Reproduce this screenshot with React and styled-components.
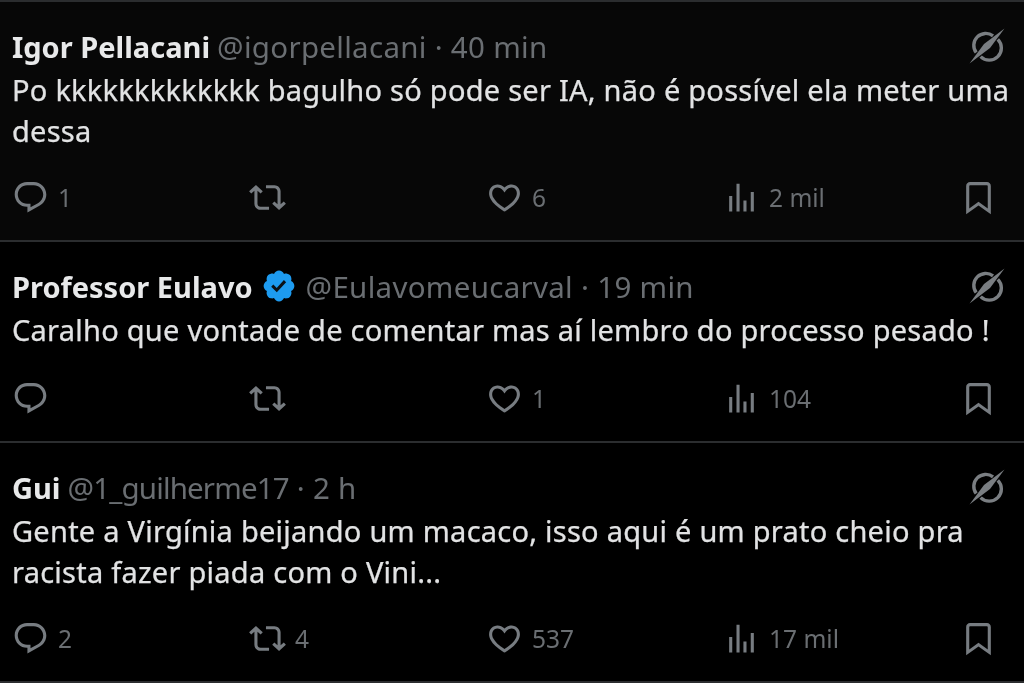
import React from 'react';
import styled, { createGlobalStyle } from 'styled-components';

const GlobalStyle = createGlobalStyle`
  html, body {
    margin: 0;
    padding: 0;
    background: #000;
  }
  body {
    font-family: "Noto Sans", "Open Sans", sans-serif;
  }
`;

const posts = [
  {
    name: 'Igor Pellacani',
    handle: '@igorpellacani',
    time: '40 min',
    text: 'Po kkkkkkkkkkkkk bagulho só pode ser IA, não é possível ela meter uma dessa',
    reply: '1',
    repost: '',
    like: '6',
    views: '2 mil',
    tall: true,
    dim: true,
  },
  {
    name: 'Professor Eulavo',
    verified: true,
    handle: '@Eulavomeucarval',
    time: '19 min',
    text: 'Caralho que vontade de comentar mas aí lembro do processo pesado !',
    reply: '',
    repost: '',
    like: '1',
    views: '104',
  },
  {
    name: 'Gui',
    handle: '@1_guilherme17',
    handleTight: true,
    time: '2 h',
    text: 'Gente a Virgínia beijando um macaco, isso aqui é um prato cheio pra racista fazer piada com o Vini...',
    reply: '2',
    repost: '4',
    like: '537',
    views: '17 mil',
    tall: true,
  },
];

const icons = {
  reply: 'M1.751 10c0-4.42 3.584-8 8.005-8h4.366c4.49 0 8.129 3.64 8.129 8.13 0 2.96-1.607 5.68-4.196 7.11l-8.054 4.46v-3.69h-.067c-4.49.1-8.183-3.51-8.183-8.01zm2 0c0 3.37 2.77 6.08 6.138 6.01l.351-.01h1.761v2.3l5.087-2.81c1.951-1.08 3.163-3.13 3.163-5.36 0-3.39-2.744-6.13-6.129-6.13H9.756C6.439 4 3.751 6.69 3.751 10z',
  repost: 'M4.5 3.88l4.432 4.14-1.364 1.46L5.5 7.55V16c0 1.1.896 2 2 2H13v2H7.5c-2.209 0-4-1.79-4-4V7.55L1.432 9.48.068 8.02 4.5 3.88zM16.5 6H11V4h5.5c2.209 0 4 1.79 4 4v8.45l2.068-1.93 1.364 1.46-4.432 4.14-4.432-4.14 1.364-1.46 2.068 1.93V8c0-1.1-.896-2-2-2z',
  like: 'M16.697 5.5c-1.222-.06-2.679.51-3.89 2.16l-.805 1.09-.806-1.09C9.984 6.01 8.526 5.44 7.304 5.5c-1.243.07-2.349.78-2.91 1.91-.552 1.12-.633 2.78.479 4.82 1.074 1.97 3.257 4.27 7.129 6.61 3.87-2.34 6.052-4.64 7.126-6.61 1.111-2.04 1.03-3.7.477-4.82-.561-1.13-1.666-1.84-2.908-1.91zm4.187 7.69c-1.351 2.48-4.001 5.12-8.379 7.67l-.503.3-.504-.3c-4.379-2.55-7.029-5.19-8.382-7.67-1.36-2.5-1.41-4.86-.514-6.67.887-1.79 2.647-2.91 4.601-3.01 1.651-.09 3.368.56 4.798 2.01 1.429-1.45 3.146-2.1 4.796-2.01 1.954.1 3.714 1.22 4.601 3.01.896 1.81.846 4.17-.514 6.67z',
  views: 'M8.75 21V3h2v18h-2zM18 21V8.5h2V21h-2zM4 21l.004-10h2L6 21H4zm9.248 0v-7h2v7h-2z',
  bookmark: 'M4 4.5C4 3.12 5.119 2 6.5 2h11C18.881 2 20 3.12 20 4.5v18.44l-8-5.71-8 5.71V4.5zM6.5 4c-.276 0-.5.22-.5.5v14.56l6-4.29 6 4.29V4.5c0-.28-.224-.5-.5-.5h-11z',
};

const Icon = ({ d }) => (
  <ActionIcon viewBox="0 0 24 24" aria-hidden="true">
    <path d={d} />
  </ActionIcon>
);

const GrokIcon = () => (
  <OptionIcon viewBox="0 0 36 36" aria-hidden="true">
    <path d="M24 7.8A12 12 0 0 0 7.2 24.6" fill="none" stroke="currentColor" strokeWidth="3.4" />
    <path d="M11.6 28.6A12 12 0 0 0 28.8 11.4" fill="none" stroke="currentColor" strokeWidth="3.4" />
    <path d="M35.5.5 L21 20 L.5 35.5 L15 16 Z" fill="currentColor" />
  </OptionIcon>
);

const Verified = () => (
  <Badge viewBox="0 0 22 22" aria-hidden="true">
    <path
      fill="#1d9bf0"
      d="M20.396 11c-.018-.646-.215-1.275-.57-1.816-.354-.54-.852-.972-1.438-1.246.223-.607.27-1.264.14-1.897-.131-.634-.437-1.218-.882-1.687-.47-.445-1.053-.75-1.687-.882-.633-.13-1.29-.083-1.897.14-.273-.587-.704-1.086-1.245-1.44S11.647 1.62 11 1.604c-.646.017-1.273.213-1.813.568s-.969.854-1.24 1.44c-.608-.223-1.267-.272-1.902-.14-.635.13-1.22.436-1.69.882-.445.47-.749 1.055-.878 1.688-.13.633-.08 1.29.144 1.896-.587.274-1.087.705-1.443 1.245-.356.54-.555 1.17-.574 1.817.02.647.218 1.276.574 1.817.356.54.856.972 1.443 1.245-.224.606-.274 1.263-.144 1.896.13.634.433 1.218.877 1.688.47.443 1.054.747 1.687.878.633.132 1.29.084 1.897-.136.274.586.705 1.084 1.246 1.439.54.354 1.17.551 1.816.569.647-.016 1.276-.213 1.817-.567s.972-.854 1.245-1.44c.604.239 1.266.296 1.903.164.636-.132 1.22-.447 1.68-.907.46-.46.776-1.044.908-1.681s.075-1.299-.165-1.903c.586-.274 1.084-.705 1.439-1.246.354-.54.551-1.17.569-1.816z"
    />
    <path fill="#0c1116" d="M9.662 14.85l-3.429-3.428 1.293-1.302 2.072 2.072 4.4-4.794 1.347 1.246z" />
  </Badge>
);

const Action = ({ d, count }) => (
  <ActionItem>
    <Icon d={d} />
    {count && <Count>{count}</Count>}
  </ActionItem>
);

const Post = ({ post }) => (
  <PostRow $tall={post.tall} $dim={post.dim}>
    <Header>
      <Name>{post.name}</Name>
      {post.verified && <Verified />}
      <Meta>
        <Handle $tight={post.handleTight}>{post.handle}</Handle> · {post.time}
      </Meta>
      <GrokIcon />
    </Header>
    <Body>{post.text}</Body>
    <Actions>
      <Action d={icons.reply} count={post.reply} />
      <Action d={icons.repost} count={post.repost} />
      <Action d={icons.like} count={post.like} />
      <Action d={icons.views} count={post.views} />
      <Action d={icons.bookmark} />
    </Actions>
  </PostRow>
);

export default function App() {
  return (
    <>
      <GlobalStyle />
      <Timeline>
        {posts.map((post) => (
          <Post key={post.handle} post={post} />
        ))}
      </Timeline>
    </>
  );
}

// the reference is a soft upscaled screenshot, hence the small blur
const Timeline = styled.main`
  width: 1024px;
  height: 683px;
  overflow: hidden;
  background: #000;
  border-top: 2px solid #2b2d2f;
  box-sizing: border-box;
  filter: blur(0.5px);
`;

const PostRow = styled.article`
  height: ${(props) => (props.$tall ? '240px' : '201px')};
  box-sizing: border-box;
  padding: 24px 0 0 12px;
  display: flex;
  flex-direction: column;
  background: ${(props) => (props.$dim ? '#070707' : '#000')};
  border-bottom: 2px solid #2b2d2f;
`;

const Header = styled.header`
  display: flex;
  align-items: center;
  height: 40px;
  padding-right: 19px;
  white-space: nowrap;
`;

const Name = styled.span`
  font-size: 29px;
  font-weight: 700;
  color: #e8e9ea;
`;

const Badge = styled.svg`
  width: 36px;
  height: 36px;
  margin: 0 2px 0 8px;
  flex: none;
`;

const Meta = styled.span`
  margin-left: 7px;
  font-size: 29.5px;
  color: #6a6e72;
  letter-spacing: 0.3px;
`;

const Handle = styled.span`
  letter-spacing: ${(props) => (props.$tight ? '-0.85px' : '0.3px')};
`;

const OptionIcon = styled.svg`
  width: 36px;
  height: 36px;
  margin-left: auto;
  color: #7a7e82;
  flex: none;
`;

const Body = styled.p`
  margin: 3px 0 0;
  padding-right: 8px;
  font-size: 29px;
  line-height: 41px;
  color: #e2e3e4;
  letter-spacing: 0.25px;
  -webkit-text-stroke: 0.25px #e2e3e4;
`;

const Actions = styled.footer`
  display: grid;
  grid-template-columns: repeat(4, 237px) 40px;
  margin-top: auto;
  margin-bottom: 24px;
`;

const ActionItem = styled.div`
  display: flex;
  align-items: center;
  gap: 9px;
  color: #777c81;
`;

const ActionIcon = styled.svg`
  width: 37px;
  height: 37px;
  fill: currentColor;
  flex: none;
`;

const Count = styled.span`
  font-size: 24.5px;
  color: #6a6e72;
`;
